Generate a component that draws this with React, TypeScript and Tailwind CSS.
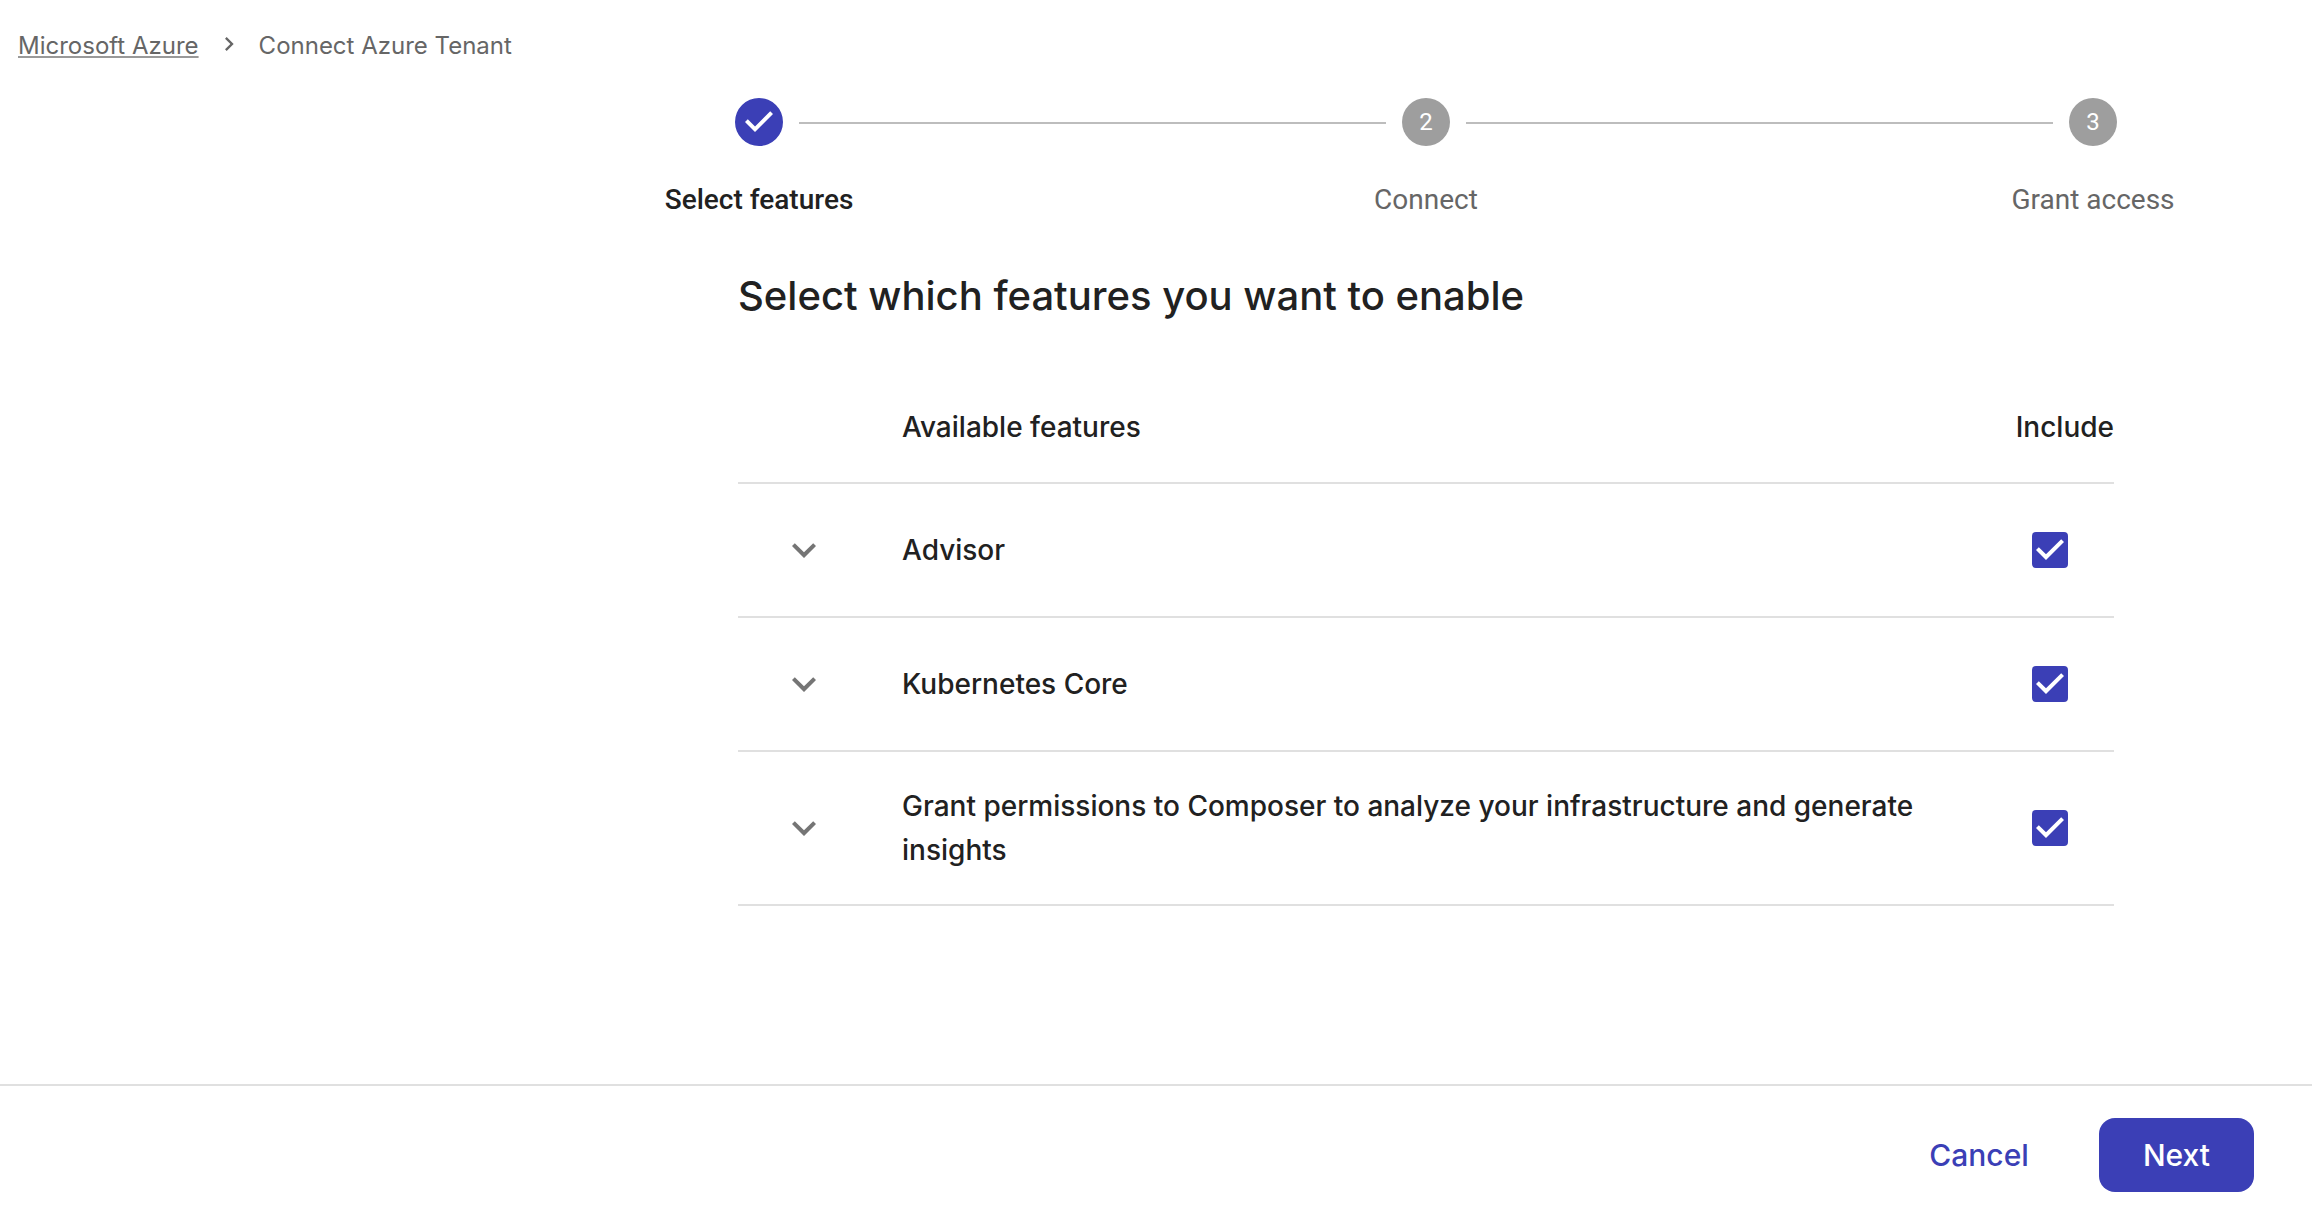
import { Fragment, useState } from 'react';

const steps = ['Select features', 'Connect', 'Grant access'];

const features = [
  { id: 'advisor', label: 'Advisor' },
  { id: 'kubernetes', label: 'Kubernetes Core' },
  { id: 'composer', label: 'Grant permissions to Composer to analyze your infrastructure and generate insights' },
];

function Breadcrumbs() {
  return (
    <nav aria-label="Breadcrumb" className="flex items-center px-[18px] pt-[26px] text-2xl leading-10 text-[#666666]">
      <a href="#azure" className="underline decoration-[#999999] decoration-2 underline-offset-2">
        Microsoft Azure
      </a>
      <svg viewBox="0 0 24 24" className="mx-4 mb-1 size-7 fill-current" aria-hidden="true">
        <path d="M10 6 8.59 7.41 13.17 12l-4.58 4.59L10 18l6-6z" />
      </svg>
      <span aria-current="page">Connect Azure Tenant</span>
    </nav>
  );
}

function Stepper({ active }: { active: number }) {
  return (
    <ol className="-mx-[3px] flex items-start font-[Roboto,sans-serif]">
      {steps.map((label, i) => (
        <Fragment key={label}>
          {i > 0 && <li aria-hidden="true" className="mx-4 mt-6 h-0.5 flex-1 bg-[#bdbdbd]" />}
          <li className="flex w-12 flex-col items-center gap-[34px]">
            {i <= active ? (
              <svg viewBox="0 0 24 24" className="size-12 fill-[#3b3fb6]" aria-hidden="true">
                <path d="M12 0a12 12 0 1 0 0 24 12 12 0 0 0 0-24zm-2 17l-5-5 1.4-1.4 3.6 3.6 7.6-7.6L19 8l-9 9z" />
              </svg>
            ) : (
              <span className="flex size-12 items-center justify-center rounded-full bg-[#9e9e9e] text-2xl text-white">
                {i + 1}
              </span>
            )}
            <span
              className={`text-[28px] leading-10 whitespace-nowrap ${
                i <= active ? 'font-medium text-[#212121]' : 'text-[#666666]'
              }`}
            >
              {label}
            </span>
          </li>
        </Fragment>
      ))}
    </ol>
  );
}

export default function App() {
  const [included, setIncluded] = useState<string[]>(features.map(f => f.id));

  const toggle = (id: string) => {
    setIncluded(prev => (prev.includes(id) ? prev.filter(x => x !== id) : [...prev, id]));
  };

  return (
    <div className="flex min-h-screen flex-col bg-white font-[Inter,sans-serif] text-[#212121]">
      <Breadcrumbs />

      <main className="grid grid-cols-[738fr_1376fr_198fr] pt-8 pb-16">
        <div className="col-start-2 min-w-0">
          <Stepper active={0} />

          <h1 className="mt-12 text-[40px] leading-14 font-medium">Select which features you want to enable</h1>

          <table className="mt-12 w-full text-[28px] leading-11">
            <thead>
              <tr className="border-b-2 border-[#e0e0e0]">
                <th className="w-[132px]" aria-label="Details" />
                <th className="px-8 py-[33px] text-left font-medium">Available features</th>
                <th className="w-32 py-[33px] text-right font-medium">Include</th>
              </tr>
            </thead>
            <tbody>
              {features.map(({ id, label }) => (
                <tr key={id} className="border-b-2 border-[#e0e0e0]">
                  <td className="px-8 py-8">
                    <button aria-label="Show details" className="flex size-[68px] items-center justify-center rounded-full">
                      <svg viewBox="0 0 24 24" className="size-12 fill-[#757575]" aria-hidden="true">
                        <path d="M16.59 8.59 12 13.17 7.41 8.59 6 10l6 6 6-6z" />
                      </svg>
                    </button>
                  </td>
                  <td className="px-8 py-8 font-medium">
                    <label htmlFor={id}>{label}</label>
                  </td>
                  <td>
                    <span className="mx-auto grid size-9">
                      <input
                        id={id}
                        type="checkbox"
                        checked={included.includes(id)}
                        onChange={() => toggle(id)}
                        className="peer col-start-1 row-start-1 size-9 appearance-none rounded border-4 border-[#757575] checked:border-[#3b3fb6] checked:bg-[#3b3fb6]"
                      />
                      <svg
                        viewBox="3 3 18 18"
                        className="pointer-events-none invisible col-start-1 row-start-1 size-9 fill-white peer-checked:visible"
                        aria-hidden="true"
                      >
                        <path d="m10 17-5-5 1.41-1.41L10 14.17l7.59-7.59L19 8z" />
                      </svg>
                    </span>
                  </td>
                </tr>
              ))}
            </tbody>
          </table>
        </div>
      </main>

      <footer className="mt-auto flex items-center justify-end gap-[26px] border-t-2 border-[#e0e0e0] pt-8 pr-[58px] pb-[22px] text-[30px] leading-[50px] font-medium">
        <button className="rounded-2xl px-11 py-3 text-[#3b3fb6]">Cancel</button>
        <button className="rounded-2xl bg-[#3b3fb6] px-11 py-3 text-white">Next</button>
      </footer>
    </div>
  );
}
